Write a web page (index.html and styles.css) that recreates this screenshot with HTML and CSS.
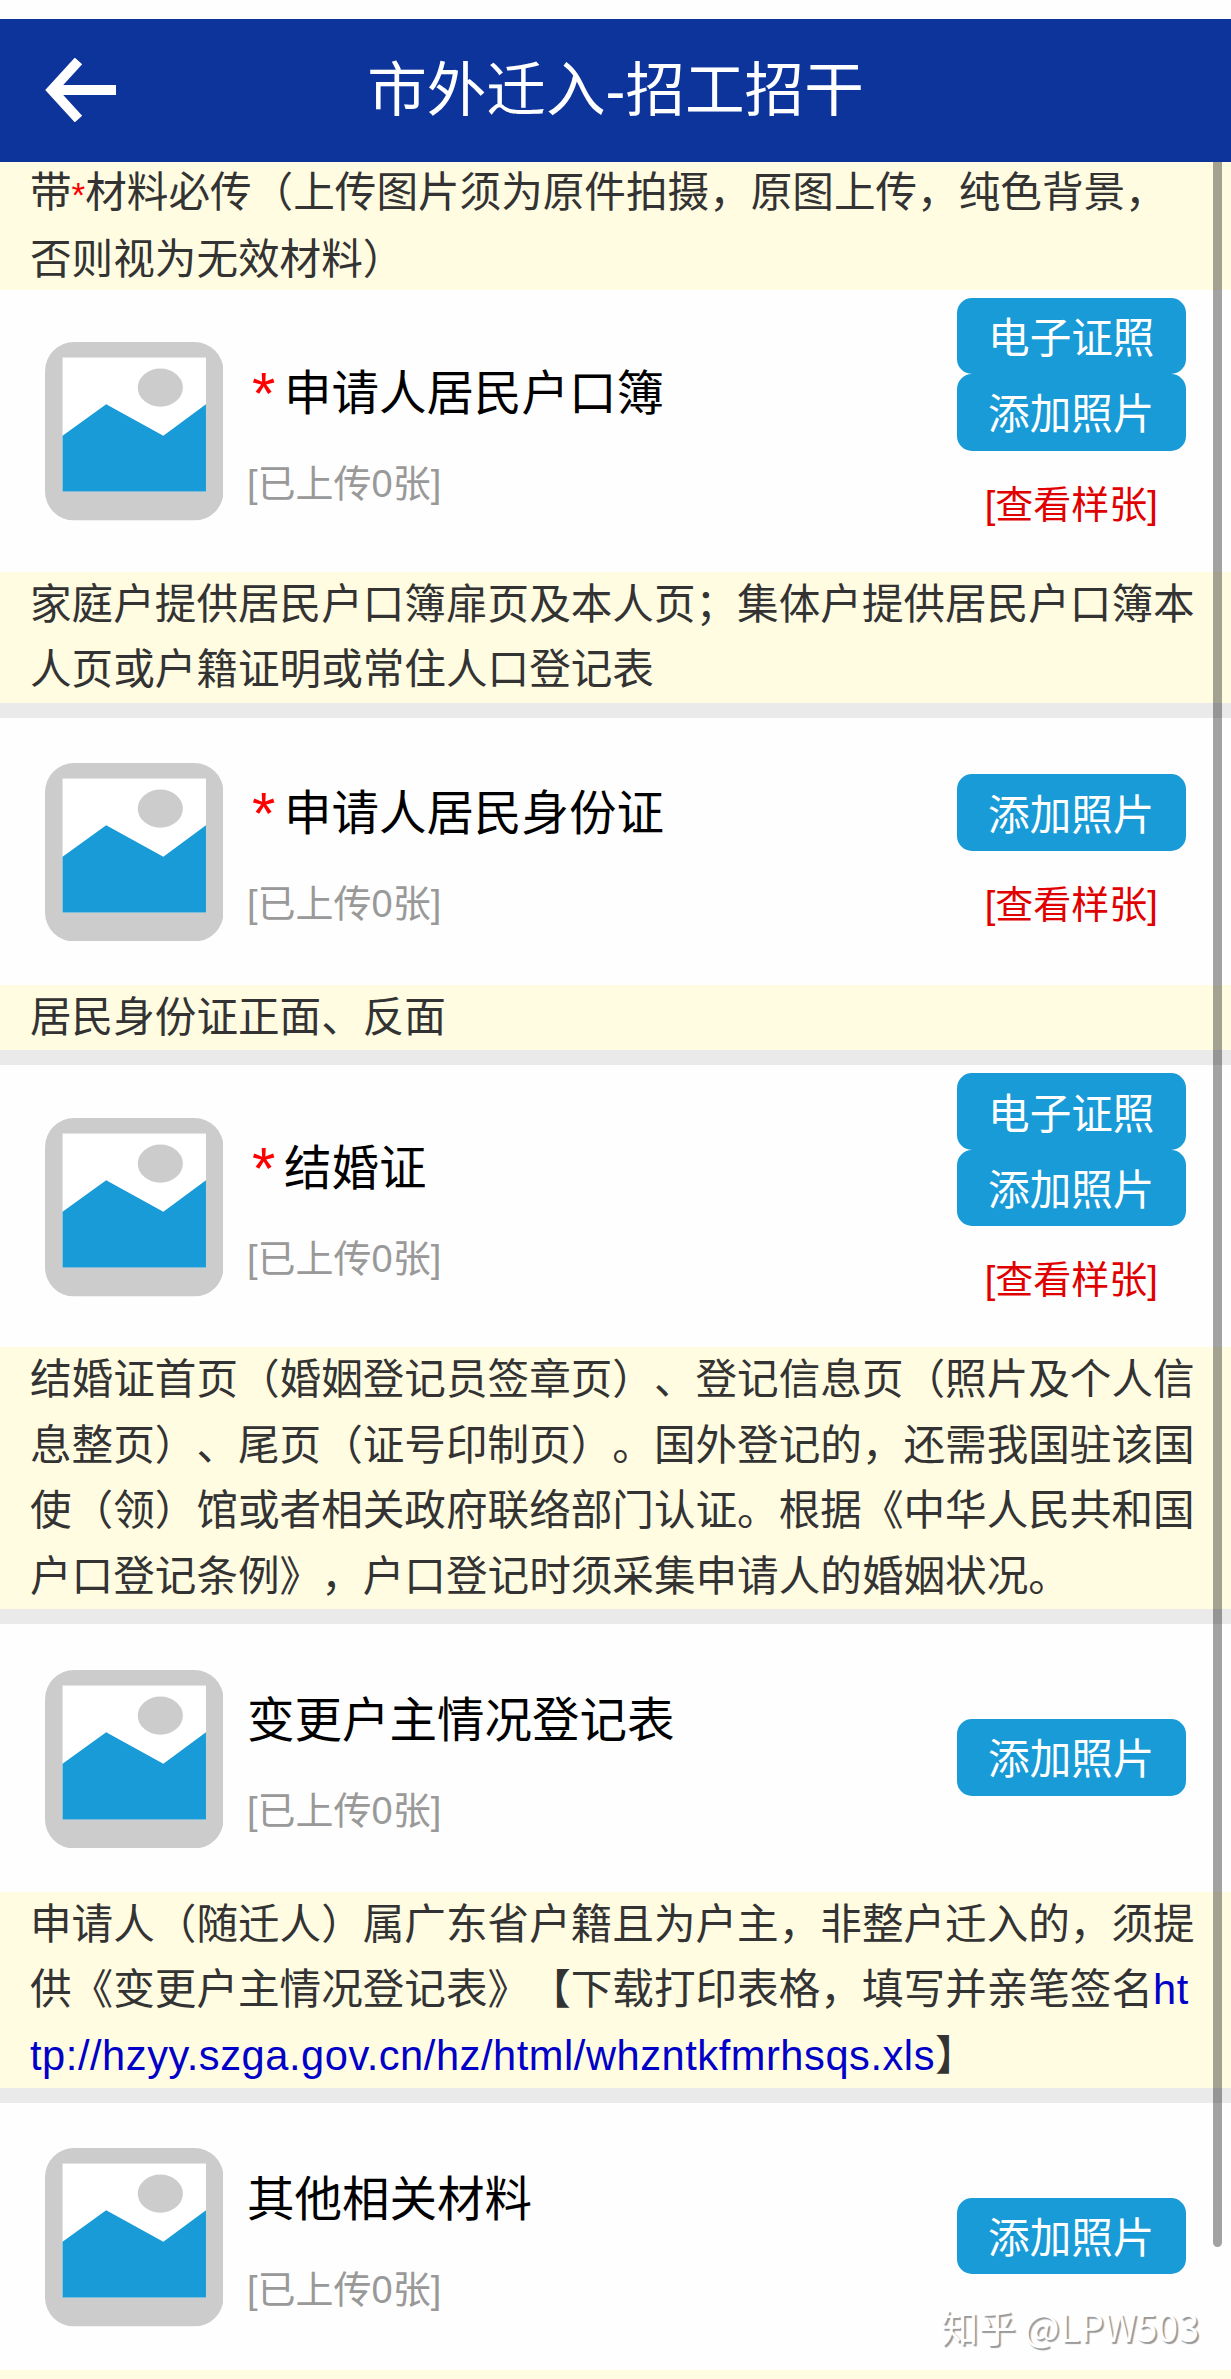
FILE: index.html
```
<!DOCTYPE html>
<html lang="zh-CN">
<head>
  <meta charset="UTF-8" />
  <meta name="viewport" content="width=device-width, initial-scale=1.0"/>
  <title>市外迁入-招工招干</title>
  <link rel="stylesheet" href="styles.css">
</head>
<body>

  <!-- shared placeholder picture -->
  <svg class="defs" width="0" height="0">
    <symbol id="pic" viewBox="0 0 178 178">
      <rect width="178" height="178" rx="29" fill="#ccc"/>
      <rect x="17.5" y="15.5" width="143" height="133.5" fill="#fff"/>
      <ellipse cx="115" cy="45.5" rx="22.5" ry="19" fill="#ccc"/>
      <path d="M17.5 93.5 L61 62 L118 93.5 L160.5 62 V149 H17.5 Z" fill="#189bd6"/>
    </symbol>
  </svg>

  <header class="header">
    <svg class="back" viewBox="0 0 72 64">
      <path d="M33.5 3 L7 32 L33.5 61 M7 32 H71" fill="none" stroke="#fff" stroke-width="10"/>
    </svg>
    <h1>市外迁入-招工招干</h1>
  </header>

  <main>
    <p class="note note-top">带<span class="star">*</span>材料必传（上传图片须为原件拍摄，原图上传，纯色背景，否则视为无效材料）</p>

    <section class="item">
      <div class="row tall">
        <svg class="pic"><use href="#pic"/></svg>
        <div class="info">
          <h2><span class="must">*</span>申请人居民户口簿</h2>
          <span class="count">[已上传0张]</span>
        </div>
        <div class="actions">
          <button>电子证照</button>
          <button>添加照片</button>
          <a class="sample">[查看样张]</a>
        </div>
      </div>
      <p class="note">家庭户提供居民户口簿扉页及本人页；集体户提供居民户口簿本人页或户籍证明或常住人口登记表</p>
    </section>

    <section class="item">
      <div class="row">
        <svg class="pic"><use href="#pic"/></svg>
        <div class="info">
          <h2><span class="must">*</span>申请人居民身份证</h2>
          <span class="count">[已上传0张]</span>
        </div>
        <div class="actions">
          <button>添加照片</button>
          <a class="sample">[查看样张]</a>
        </div>
      </div>
      <p class="note">居民身份证正面、反面</p>
    </section>

    <section class="item">
      <div class="row tall">
        <svg class="pic"><use href="#pic"/></svg>
        <div class="info">
          <h2><span class="must">*</span>结婚证</h2>
          <span class="count">[已上传0张]</span>
        </div>
        <div class="actions">
          <button>电子证照</button>
          <button>添加照片</button>
          <a class="sample">[查看样张]</a>
        </div>
      </div>
      <p class="note">结婚证首页（婚姻登记员签章页）、登记信息页（照片及个人信息整页）、尾页（证号印制页）。国外登记的，还需我国驻该国使（领）馆或者相关政府联络部门认证。根据《中华人民共和国户口登记条例》，户口登记时须采集申请人的婚姻状况。</p>
    </section>

    <section class="item">
      <div class="row">
        <svg class="pic"><use href="#pic"/></svg>
        <div class="info">
          <h2>变更户主情况登记表</h2>
          <span class="count">[已上传0张]</span>
        </div>
        <div class="actions">
          <button>添加照片</button>
        </div>
      </div>
      <p class="note">申请人（随迁人）属广东省户籍且为户主，非整户迁入的，须提供《变更户主情况登记表》【下载打印表格，填写并亲笔签名<a class="link">http://hzyy.szga.gov.cn/hz/html/whzntkfmrhsqs.xls</a>】</p>
    </section>

    <section class="item">
      <div class="row">
        <svg class="pic"><use href="#pic"/></svg>
        <div class="info">
          <h2>其他相关材料</h2>
          <span class="count">[已上传0张]</span>
        </div>
        <div class="actions">
          <button>添加照片</button>
        </div>
      </div>
      <p class="note"></p>
    </section>
  </main>

  <div class="scrollbar"></div>
  <div class="watermark">知乎 @LPW503</div>

</body>
</html>
```
FILE: styles.css
```
* { box-sizing: border-box; margin: 0; padding: 0; }
body {
  position: relative;
  height: 2379px;
  padding-top: 18.5px;
  overflow: hidden;
  background: #fefefe;
  color: #000;
  font-family: "Liberation Sans", "Noto Sans CJK SC", sans-serif;
  font-weight: 400;
  text-spacing-trim: space-all;
}
.defs { position: absolute; }

.header {
  position: relative;
  z-index: 1;
  display: flex;
  align-items: center;
  justify-content: center;
  height: 143px;
  background: #0d349b;
}
.header h1 {
  color: #fff;
  font-size: 59.6px;
  font-weight: 400;
  line-height: 143px;
}
.back {
  position: absolute;
  left: 45px;
  top: 39px;
  width: 72px;
  height: 64px;
}

.note {
  min-height: 65.5px;
  padding: 0 33px 0 30px;
  background: #fffce2;
  color: #333;
  font-size: 41.6px;
  line-height: 65.5px;
  word-break: break-all;
}
.note-top { height: 130px; margin-top: -2px; }
.star { color: #f00; font-size: 35px; }
.link { color: #0000c8; letter-spacing: .55px; }

.item { border-bottom: 15px solid #eaeaea; }
.row {
  display: flex;
  align-items: center;
  height: 267.3px;
  padding: 0 45.5px 0 44.5px;
}
.row.tall { height: 282px; }
.pic { width: 178.5px; height: 178.5px; margin-top: 2px; }

.info { flex: 1; margin-left: 24px; padding-top: 14px; }
.info h2 {
  height: 92px;
  font-size: 47.5px;
  font-weight: 400;
  line-height: 94px;
}
.must {
  display: inline-block;
  width: 37px;
  padding-left: 5px;
  color: #f00;
  font-size: 60px;
  line-height: 60px;
  vertical-align: -4px;
}
.count {
  display: block;
  color: #999;
  font-size: 38px;
  line-height: 90px;
}

.actions {
  display: flex;
  flex-direction: column;
  width: 228.5px;
  margin-top: -1px;
  text-align: center;
}
.tall .actions { align-self: flex-start; padding-top: 9px; }
.actions button {
  height: 76.5px;
  padding-bottom: 2px;
  border: none;
  border-radius: 15px;
  background: #189bd6;
  color: #fff;
  font-family: inherit;
  font-size: 41.6px;
}
.sample {
  margin-top: 32px;
  color: #e00000;
  font-size: 38px;
  line-height: 44px;
}

.scrollbar {
  position: absolute;
  top: 161.5px;
  right: 9px;
  width: 9px;
  height: 2085px;
  border-radius: 0 0 5px 5px;
  background: rgba(0, 0, 0, .36);
}
.watermark {
  position: absolute;
  right: 32px;
  bottom: 26px;
  color: #fff;
  font-family: "Noto Sans CJK SC", sans-serif;
  font-size: 37.5px;
  line-height: 54px;
  text-shadow: 2px 2px 1px #999;
}
```
